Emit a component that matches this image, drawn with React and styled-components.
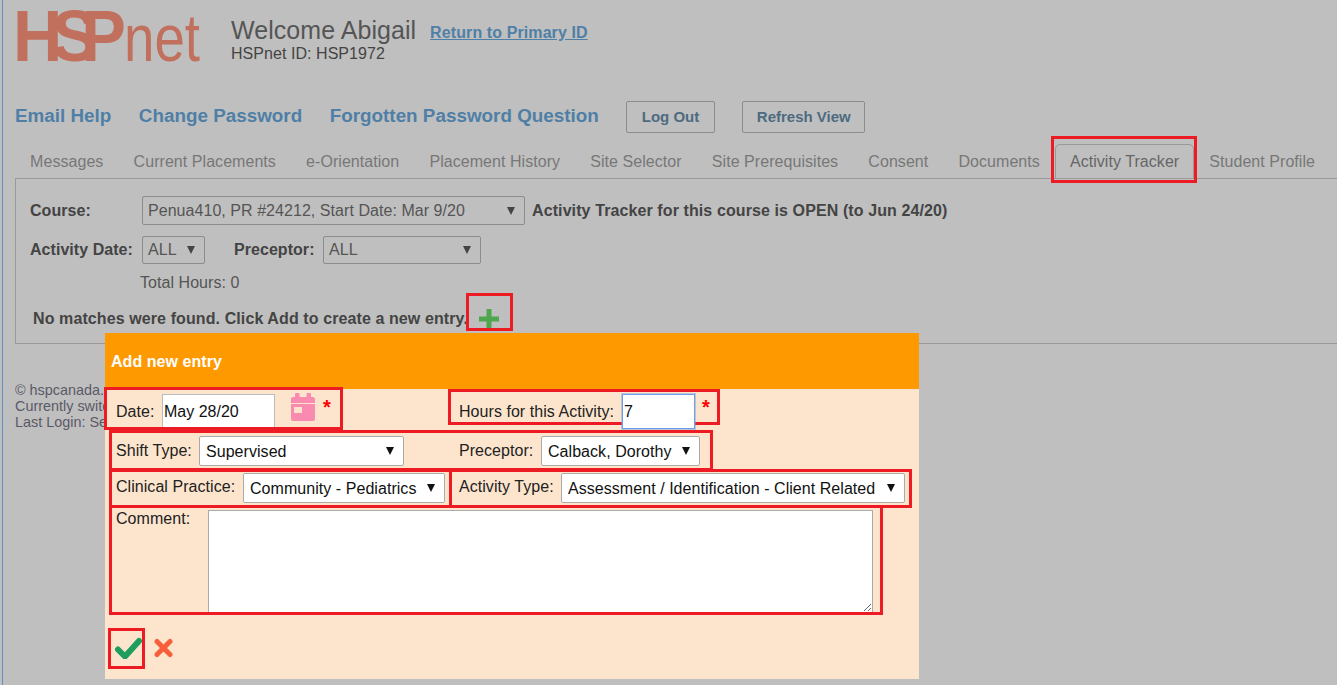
import React from "react";
import styled, { createGlobalStyle } from "styled-components";

const Global = createGlobalStyle`
  html, body { margin: 0; padding: 0; background: #bfbfbf; height: 100%; overflow: hidden; }
  body { font-family: "Liberation Sans", Arial, sans-serif; font-size: 16px; letter-spacing: 0.05px; color: #555; }
`;

const Page = styled.div`
  position: relative;
  box-sizing: border-box;
  margin-left: 2px;
  height: 685px;
  overflow: hidden;
  border-left: 1px solid #5b93c4;
`;
const Header = styled.header`
  display: flex;
  height: 101px;
  box-sizing: border-box;
  padding: 10px 0 0 14px;
`;
const Logo = styled.svg`
  width: 183px;
  height: 54px;
  flex: none;
  overflow: visible;
  text { fill: #c1705d; font-family: "Liberation Sans", Arial, sans-serif; letter-spacing: 0; }
`;
const Welcome = styled.div`
  margin: 6px 0 0 31px;
`;
const WelcomeLine = styled.div`
  display: flex;
  align-items: baseline;
  height: 29px;
`;
const Greeting = styled.span`
  font-size: 25px;
  line-height: 28px;
  letter-spacing: 0.05px;
  color: #555;
`;
const ReturnLink = styled.a`
  position: relative;
  top: -1px;
  margin-left: 14px;
  font-weight: bold;
  font-size: 16px;
  letter-spacing: 0.1px;
  color: #4f7fa6;
  text-decoration: underline;
`;
const IdLine = styled.div`
  line-height: 18px;
  color: #444;
`;
const Nav = styled.nav`
  display: flex;
  align-items: flex-start;
  gap: 27.5px;
  height: 32px;
  padding-left: 12px;
`;
const NavLink = styled.a`
  font-weight: bold;
  font-size: 18.85px;
  line-height: 30px;
  letter-spacing: 0;
  color: #4f7fa6;
`;
const Button = styled.button`
  height: 32px;
  width: ${(p) => p.$w}px;
  padding: 0 0 2px;
  background: #bfbfbf;
  border: 1px solid #8c8c8c;
  border-radius: 2px;
  font: bold 15px "Liberation Sans", Arial, sans-serif;
  color: #4d6b80;
`;
const Tabs = styled.div`
  display: flex;
  margin: 11px 0 0 12px;
  height: 34px;
`;
const Tab = styled.div`
  box-sizing: border-box;
  padding: 0 15.1px;
  height: 35px;
  line-height: 36px;
  white-space: nowrap;
  color: #777;
  ${(p) => p.$active && `
    border: 1px solid #999;
    border-radius: 5px 5px 0 0;
    padding: 0 14px;
    line-height: 34px;
    color: #666;
  `}
`;
const Panel = styled.section`
  box-sizing: border-box;
  margin-left: 12px;
  height: 166px;
  border: 1px solid #999;
  border-right: none;
  padding: 17px 0 0 14px;
`;
const Row = styled.div`
  display: flex;
  align-items: center;
  margin-top: ${(p) => p.$mt || 0}px;
  color: #444;
`;
const OpenNotice = styled.div`
  margin-left: 7px;
  font-weight: bold;
  letter-spacing: 0.1px;
  color: #444;
`;
const FilterLabel = styled.label`
  font-weight: bold;
  color: #444;
  width: ${(p) => p.$w}px;
  margin-left: ${(p) => p.$ml || 0}px;
  flex: none;
`;
const SelectBox = styled.div`
  position: relative;
  box-sizing: border-box;
  flex: none;
  display: flex;
  align-items: center;
  width: ${(p) => p.$w}px;
  height: ${(p) => p.$h || 30}px;
  padding: ${(p) => (p.$light ? "1px 0 0 6px" : "0 0 0 5px")};
  border: 1px solid ${(p) => (p.$light ? "#aaa" : "#8c8c8c")};
  border-radius: 2px;
  background: ${(p) => (p.$light ? "#fff" : "transparent")};
  color: ${(p) => (p.$light ? "#111" : "#555")};
  white-space: nowrap;
  &::after {
    content: "";
    position: absolute;
    right: 9px;
    top: 50%;
    margin-top: -4px;
    border-left: 4.5px solid transparent;
    border-right: 4.5px solid transparent;
    border-top: 8px solid ${(p) => (p.$light ? "#111" : "#444")};
  }
`;
const Total = styled.div`
  margin: 10px 0 0 110px;
  line-height: 18px;
  color: #555;
`;
const NoMatches = styled.div`
  display: flex;
  align-items: center;
  margin: 18px 0 0 3px;
  height: 18px;
  font-weight: bold;
  letter-spacing: 0.1px;
  color: #444;
`;
const PlusIcon = styled.svg`
  width: 20px;
  height: 20px;
  margin-left: 11px;
  flex: none;
`;
const Footer = styled.footer`
  margin: 38px 0 0 12px;
  font-size: 14.4px;
  letter-spacing: 0;
  line-height: 16px;
  color: #5a5a66;
  white-space: nowrap;
`;
const Dialog = styled.section`
  position: absolute;
  left: 102px;
  top: 333px;
  width: 814px;
  height: 346px;
  background: #fde5cd;
  color: #222;
`;
const DialogTitle = styled.h2`
  margin: 0;
  height: 56px;
  padding-left: 6px;
  background: #ff9900;
  color: #fff;
  font-size: 16px;
  line-height: 58px;
  font-weight: bold;
`;
const FormRow = styled.div`
  display: grid;
  grid-template-columns: 343px 1fr;
  padding-left: 11px;
  margin-top: ${(p) => p.$mt}px;
  height: ${(p) => p.$h}px;
`;
const Field = styled.div`
  display: flex;
  align-items: center;
  height: 100%;
`;
const FieldLabel = styled.label`
  flex: none;
  width: ${(p) => p.$w}px;
  color: #222;
  position: relative;
  top: ${(p) => p.$up || 0}px;
`;
const TextInput = styled.input`
  box-sizing: border-box;
  flex: none;
  width: ${(p) => p.$w}px;
  height: 100%;
  padding: 0 1px;
  border: 1px solid #bbb;
  background: #fff;
  outline: none;
  font: 16px "Liberation Sans", Arial, sans-serif;
  color: #111;
`;
const FocusedInput = styled(TextInput)`
  position: relative;
  z-index: 2;
  height: 35px;
  padding: 0 0 0 1px;
  align-self: flex-start;
  border-color: #6f9de8;
  box-shadow: 0 0 0 1px rgba(111, 157, 232, 0.45);
`;
const CalendarIcon = styled.svg`
  width: 24px;
  height: 28px;
  margin-left: 16px;
  flex: none;
  align-self: flex-start;
  margin-top: -1px;
`;
const Required = styled.span`
  color: #f00;
  font-size: 20px;
  font-weight: bold;
  margin-left: ${(p) => p.$ml}px;
  position: relative;
  top: -5px;
`;
const CommentRow = styled.div`
  display: flex;
  margin-top: 7px;
  padding-left: 11px;
`;
const CommentLabel = styled.label`
  width: 92px;
  flex: none;
  padding-top: 1px;
  line-height: 16px;
`;
const Comment = styled.textarea`
  box-sizing: border-box;
  width: 665px;
  height: 103px;
  border: 1px solid #aaa;
  background: #fff;
  margin: 0;
  outline: none;
`;
const Actions = styled.div`
  display: flex;
  align-items: center;
  gap: 12px;
  margin: 24px 0 0 10px;
`;
const Mark = styled.div`
  position: absolute;
  box-sizing: border-box;
  border: 3px solid #ed1c24;
  pointer-events: none;
  left: ${(p) => p.$x - 3}px;
  top: ${(p) => p.$y}px;
  width: ${(p) => p.$w}px;
  height: ${(p) => p.$h}px;
`;

const TABS = ["Messages", "Current Placements", "e-Orientation", "Placement History", "Site Selector", "Site Prerequisites", "Consent", "Documents", "Activity Tracker", "Student Profile"];
const MARKS = [
  [1051, 136, 146, 47], [466, 293, 47, 38], [104, 387, 239, 43], [448, 389, 272, 36],
  [109, 430, 604, 41], [109, 469, 343, 39], [449, 469, 463, 39], [109, 505, 774, 110], [108, 628, 37, 41],
];

export default function App() {
  return (
    <Page>
      <Global />
      <Header>
        <Logo viewBox="0 0 183 54" aria-label="HSPnet logo">
          <text transform="translate(-4 51) scale(0.95 1)" fontSize="72" fontWeight="bold">H</text>
          <text transform="translate(35 51) scale(0.95 1)" fontSize="72" fontWeight="bold">S</text>
          <text transform="translate(64.3 51) scale(0.93 1)" fontSize="72" fontWeight="bold">P</text>
          <text x="107" y="51" fontSize="66" textLength="76" lengthAdjust="spacingAndGlyphs">net</text>
        </Logo>
        <Welcome>
          <WelcomeLine>
            <Greeting>Welcome Abigail</Greeting>
            <ReturnLink>Return to Primary ID</ReturnLink>
          </WelcomeLine>
          <IdLine>HSPnet ID: HSP1972</IdLine>
        </Welcome>
      </Header>
      <Nav>
        <NavLink>Email Help</NavLink>
        <NavLink>Change Password</NavLink>
        <NavLink>Forgotten Password Question</NavLink>
        <Button $w={88.5}>Log Out</Button>
        <Button $w={123}>Refresh View</Button>
      </Nav>
      <Tabs>
        {TABS.map((t) => (
          <Tab key={t} $active={t === "Activity Tracker"}>{t}</Tab>
        ))}
      </Tabs>
      <Panel>
        <Row>
          <FilterLabel $w={112}>Course:</FilterLabel>
          <SelectBox $w={383} $h={29}>Penua410, PR #24212, Start Date: Mar 9/20</SelectBox>
          <OpenNotice>Activity Tracker for this course is OPEN (to Jun 24/20)</OpenNotice>
        </Row>
        <Row $mt={11}>
          <FilterLabel $w={112}>Activity Date:</FilterLabel>
          <SelectBox $w={63} $h={28}>ALL</SelectBox>
          <FilterLabel $w={89} $ml={29}>Preceptor:</FilterLabel>
          <SelectBox $w={158} $h={28}>ALL</SelectBox>
        </Row>
        <Total>Total Hours: 0</Total>
        <NoMatches>
          No matches were found. Click Add to create a new entry.
          <PlusIcon viewBox="0 0 20 20"><path d="M10 0v20M0 10h20" stroke="#4ea64e" strokeWidth="5" /></PlusIcon>
        </NoMatches>
      </Panel>
      <Footer>
        <div>© hspcanada.</div>
        <div>Currently switched</div>
        <div>Last Login: Sep</div>
      </Footer>
      <Dialog>
        <DialogTitle>Add new entry</DialogTitle>
        <FormRow $mt={5} $h={36}>
          <Field>
            <FieldLabel $w={46}>Date:</FieldLabel>
            <TextInput $w={113} defaultValue="May 28/20" />
            <CalendarIcon viewBox="0 0 24 28">
              <path fill="#f98bb0" d="M5 0h2.5a1 1 0 0 1 1 1v3h7V1a1 1 0 0 1 1-1H19a1 1 0 0 1 1 1v3h2a2 2 0 0 1 2 2v4H0V6a2 2 0 0 1 2-2h2V1a1 1 0 0 1 1-1zM0 11h24v15a2 2 0 0 1-2 2H2a2 2 0 0 1-2-2zm3 3v6h8v-6z" />
            </CalendarIcon>
            <Required $ml={8}>*</Required>
          </Field>
          <Field>
            <FieldLabel $w={163}>Hours for this Activity:</FieldLabel>
            <FocusedInput $w={73} defaultValue="7" />
            <Required $ml={7}>*</Required>
          </Field>
        </FormRow>
        <FormRow $mt={6} $h={30}>
          <Field>
            <FieldLabel $w={83}>Shift Type:</FieldLabel>
            <SelectBox $w={205} $light>Supervised</SelectBox>
          </Field>
          <Field>
            <FieldLabel $w={82}>Preceptor:</FieldLabel>
            <SelectBox $w={159} $light>Calback, Dorothy</SelectBox>
          </Field>
        </FormRow>
        <FormRow $mt={7} $h={30}>
          <Field>
            <FieldLabel $w={127} $up={-1}>Clinical Practice:</FieldLabel>
            <SelectBox $w={202} $light>Community - Pediatrics</SelectBox>
          </Field>
          <Field>
            <FieldLabel $w={102} $up={-1}>Activity Type:</FieldLabel>
            <SelectBox $w={344} $light>Assessment / Identification - Client Related</SelectBox>
          </Field>
        </FormRow>
        <CommentRow>
          <CommentLabel>Comment:</CommentLabel>
          <Comment />
        </CommentRow>
        <Actions>
          <svg width="27" height="22" viewBox="0 0 27 22"><path d="M3 12.5l7 7L24 4" fill="none" stroke="#1f9d5c" strokeWidth="6" strokeLinecap="round" strokeLinejoin="round" /></svg>
          <svg width="19" height="20" viewBox="0 0 19 20"><path d="M3 3.5l13 13M16 3.5l-13 13" fill="none" stroke="#f5603a" strokeWidth="5" strokeLinecap="round" /></svg>
        </Actions>
      </Dialog>
      {MARKS.map(([x, y, w, h]) => (
        <Mark key={`${x}-${y}`} $x={x} $y={y} $w={w} $h={h} />
      ))}
    </Page>
  );
}
